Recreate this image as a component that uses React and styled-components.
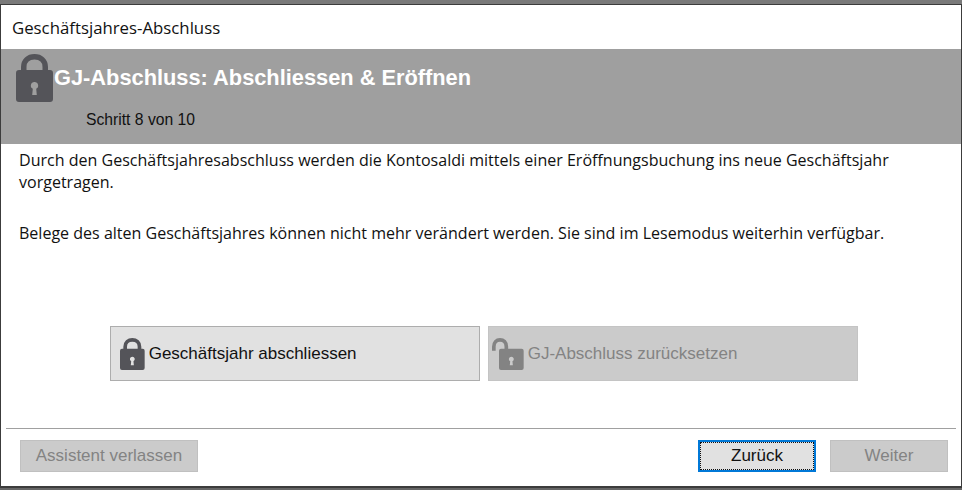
import React from "react";
import styled, { createGlobalStyle } from "styled-components";

const GlobalStyle = createGlobalStyle`
  html, body {
    margin: 0;
    padding: 0;
    width: 962px;
    height: 490px;
    overflow: hidden;
    background: #6e6e6e;
  }
`;

const Page = styled.div`
  width: 962px;
  height: 490px;
  box-sizing: border-box;
  padding-top: 4px;
  padding-bottom: 2px;
  background: linear-gradient(#7a7a7a, #666);
`;

const Dialog = styled.div`
  height: 100%;
  box-sizing: border-box;
  display: flex;
  flex-direction: column;
  background: #fff;
  border: 1px solid #3c3c3c;
  border-bottom-width: 2px;
`;

const TitleBar = styled.div`
  height: 44px;
  flex: none;
  box-sizing: border-box;
  padding: 13px 0 0 11px;
  font-family: "Open Sans", sans-serif;
  font-size: 16.8px;
  line-height: 20px;
  color: #111;
`;

const Banner = styled.div`
  height: 95px;
  flex: none;
  box-sizing: border-box;
  background: #9f9f9f;
  padding: 5px 0 0 15px;
`;

const BannerTop = styled.div`
  display: flex;
  align-items: flex-start;
  gap: 1px;
`;

const BannerTitle = styled.div`
  font-family: "Liberation Sans", sans-serif;
  font-weight: bold;
  font-size: 21.8px;
  line-height: 24px;
  color: #fff;
  margin-top: 12px;
`;

const Step = styled.div`
  font-family: "Liberation Sans", sans-serif;
  font-size: 15.7px;
  line-height: 18px;
  color: #111;
  padding-left: 70px;
  margin-top: 9px;
`;

const Body = styled.div`
  flex: 1;
  display: flex;
  flex-direction: column;
  padding: 5px 18px 0;
  font-family: "Open Sans", sans-serif;
  font-size: 16.05px;
  line-height: 22px;
  color: #111;
`;

const Para = styled.p`
  margin: 0 0 29px;
`;

const ActionRow = styled.div`
  display: flex;
  gap: 8px;
  margin: 53px 0 0 91px;
`;

const ActionButton = styled.div`
  width: 370px;
  height: 55px;
  box-sizing: border-box;
  display: flex;
  align-items: center;
  gap: 4px;
  padding-left: ${(p) => (p.$muted ? 3 : 9)}px;
  border: 1px solid ${(p) => (p.$muted ? "#c4c4c4" : "#adadad")};
  background: ${(p) => (p.$muted ? "#cbcbcb" : "#e1e1e1")};
  color: ${(p) => (p.$muted ? "#838383" : "#111")};
  font-family: "Liberation Sans", sans-serif;
  font-size: 17px;
`;

const Footer = styled.div`
  flex: none;
  margin: 0 5px;
  border-top: 1px solid #a0a0a0;
  height: 58px;
  box-sizing: border-box;
  padding: 11px 8px 0 14px;
  display: flex;
  gap: 14px;
`;

const FootButton = styled.div`
  width: ${(p) => p.$w}px;
  height: 32px;
  box-sizing: border-box;
  display: flex;
  align-items: center;
  justify-content: center;
  font-family: "Liberation Sans", sans-serif;
  font-size: 17px;
  border: 1px solid #c0c0c0;
  background: #cbcbcb;
  color: #838383;
  ${(p) => p.$push && "margin-left: auto;"}
  ${(p) =>
    p.$focus &&
    `
    position: relative;
    border: 2px solid #0078d7;
    background: #e1e1e1;
    color: #111;
    &::after {
      content: "";
      position: absolute;
      inset: 0;
      border: 1px dotted #111;
    }
  `}
`;

const BODY_PATH =
  "M3 16 H34 A3 3 0 0 1 37 19 V45 A3 3 0 0 1 34 48 H3 A3 3 0 0 1 0 45 V19 A3 3 0 0 1 3 16 Z " +
  "M18.5 28 A3.6 3.6 0 0 0 16.8 34.8 L16.2 41 H20.8 L20.2 34.8 A3.6 3.6 0 0 0 18.5 28 Z";

function Lock({ height, color }) {
  return (
    <svg width={(height * 37) / 48} height={height} viewBox="0 0 37 48" style={{ flex: "none" }}>
      <path d="M7.75 18 V13 C7.75 6.5 12.5 2.75 18.5 2.75 C24.5 2.75 29.25 6.5 29.25 13 V18" fill="none" stroke={color} strokeWidth="5.5" />
      <path fillRule="evenodd" fill={color} d={BODY_PATH} />
    </svg>
  );
}

function OpenLock({ height, color }) {
  return (
    <svg width={(height * 47.5) / 48} height={height} viewBox="0 0 47.5 48" style={{ flex: "none" }}>
      <path d="M2.75 19 V13 C2.75 6.5 6.5 2.75 12 2.75 C17.5 2.75 21.5 6.5 21.5 13 V18" fill="none" stroke={color} strokeWidth="5.5" />
      <path fillRule="evenodd" fill={color} d={BODY_PATH} transform="translate(10.5 0)" />
    </svg>
  );
}

export default function App() {
  return (
    <Page>
      <GlobalStyle />
      <Dialog>
        <TitleBar>Geschäftsjahres-Abschluss</TitleBar>
        <Banner>
          <BannerTop>
            <Lock height={48} color="#545459" />
            <BannerTitle>GJ-Abschluss: Abschliessen &amp; Eröffnen</BannerTitle>
          </BannerTop>
          <Step>Schritt 8 von 10</Step>
        </Banner>
        <Body>
          <Para>
            Durch den Geschäftsjahresabschluss werden die Kontosaldi mittels einer Eröffnungsbuchung ins neue Geschäftsjahr vorgetragen.
          </Para>
          <Para>
            Belege des alten Geschäftsjahres können nicht mehr verändert werden. Sie sind im Lesemodus weiterhin verfügbar.
          </Para>
          <ActionRow>
            <ActionButton>
              <Lock height={32} color="#545459" />
              Geschäftsjahr abschliessen
            </ActionButton>
            <ActionButton $muted>
              <OpenLock height={32} color="#838383" />
              GJ-Abschluss zurücksetzen
            </ActionButton>
          </ActionRow>
        </Body>
        <Footer>
          <FootButton $w={178}>Assistent verlassen</FootButton>
          <FootButton $w={118} $push $focus>
            Zurück
          </FootButton>
          <FootButton $w={118}>Weiter</FootButton>
        </Footer>
      </Dialog>
    </Page>
  );
}
